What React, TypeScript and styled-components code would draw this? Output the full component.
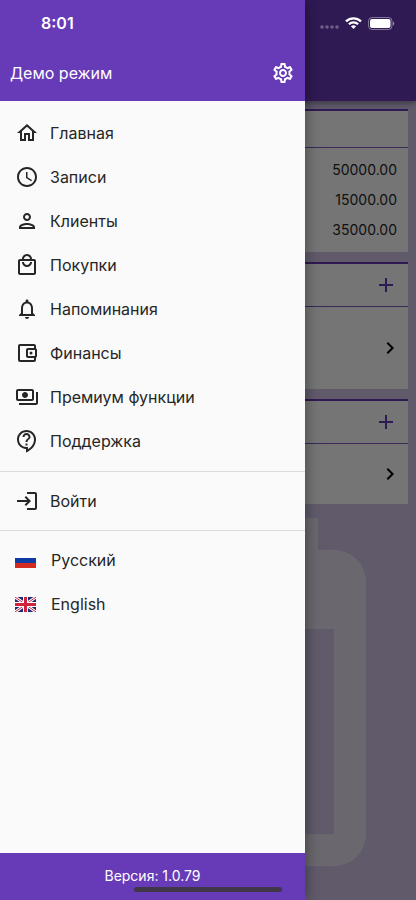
import React from "react";
import styled, { createGlobalStyle } from "styled-components";
import type { IconType } from "react-icons";
import {
  MdAdd,
  MdChevronRight,
  MdLogin,
  MdNotificationsNone,
  MdOutlineAccountBalanceWallet,
  MdOutlineContactSupport,
  MdOutlineHome,
  MdOutlineLocalMall,
  MdOutlinePayments,
  MdOutlinePerson,
  MdOutlineSettings,
  MdSchedule,
} from "react-icons/md";

const color = {
  primary: "#673ab7",
  primaryLight: "#7e57c2",
  page: "#d1c4e9",
  surface: "#fafafa",
  card: "#ffffff",
  text: "#262626",
  divider: "#dcdcdc",
};

const GlobalStyle = createGlobalStyle`
  * { box-sizing: border-box; }
  body { margin: 0; font-family: Inter, "Noto Sans", sans-serif; color: ${color.text}; }
  button { font: inherit; color: inherit; background: none; border: 0; padding: 0; cursor: pointer; }
  svg { display: block; flex-shrink: 0; }
`;

const Screen = styled.div`
  position: relative;
  min-height: 100vh;
  overflow: hidden;
  background: ${color.page};
`;

const AppBar = styled.header`
  position: relative;
  height: 101px;
  background: ${color.primary};
  box-shadow: 0 2px 6px rgba(0, 0, 0, 0.4);
`;

const Watermark = styled.svg`
  position: absolute;
  left: 50%;
  bottom: 34px;
  width: 316px;
  height: 348px;
  margin-left: -158px;
  fill: #e7e2ef;
`;

const Cards = styled.main`
  position: relative;
  display: flex;
  flex-direction: column;
  gap: 10px;
  padding: 8px;
`;

const Card = styled.section`
  background: ${color.card};
  border-top: 2px solid ${color.primary};
`;

const CardHeader = styled.div<{ $height: number }>`
  display: flex;
  align-items: center;
  justify-content: flex-end;
  height: ${(p) => p.$height}px;
  padding-right: 10px;
  border-bottom: 1px solid ${color.primaryLight};
  color: ${color.primary};
`;

const Amounts = styled.div`
  display: flex;
  flex-direction: column;
  padding: 7px 11px;
  font-size: 14px;
  line-height: 30px;
  text-align: right;
`;

const CardLink = styled.button<{ $height: number }>`
  display: flex;
  align-items: center;
  justify-content: flex-end;
  width: 100%;
  height: ${(p) => p.$height}px;
  padding-right: 6px;
  color: #000;
`;

const Scrim = styled.div`
  position: absolute;
  inset: 0;
  background: rgba(0, 0, 0, 0.54);
`;

const Drawer = styled.aside`
  position: absolute;
  inset: 0 auto 0 0;
  display: flex;
  flex-direction: column;
  width: 74%;
  max-width: 305px;
  background: ${color.surface};
  box-shadow: 2px 0 12px rgba(0, 0, 0, 0.35);
`;

const DrawerHeader = styled.div`
  display: flex;
  align-items: center;
  justify-content: space-between;
  height: 101px;
  padding: 45px 10px 0;
  background: ${color.primary};
  color: #fff;
  font-size: 16px;
`;

const Menu = styled.nav`
  flex: 1;
`;

const Group = styled.ul`
  margin: 0;
  padding: 8px 0;
  list-style: none;
  & + & {
    border-top: 1px solid ${color.divider};
    padding: 7px 0;
  }
  &:first-child {
    padding-top: 10px;
  }
`;

const MenuButton = styled.button`
  display: flex;
  align-items: center;
  gap: 11px;
  width: 100%;
  height: 44px;
  padding: 0 15px;
  font-size: 16px;
  text-align: left;
`;

const LanguageButton = styled(MenuButton)`
  gap: 15px;
`;

const DrawerFooter = styled.footer`
  height: 47px;
  background: ${color.primary};
  color: #fff;
  font-size: 14px;
  line-height: 46px;
  text-align: center;
`;

const StatusBar = styled.div`
  position: absolute;
  inset: 0 0 auto 0;
  display: flex;
  align-items: center;
  justify-content: space-between;
  height: 46px;
  padding: 0 21px 0 41px;
  color: #fff;
  font-size: 16px;
  font-weight: 600;
`;

const StatusIcons = styled.div`
  display: flex;
  align-items: center;
  gap: 6px;
`;

const HomeIndicator = styled.div`
  position: absolute;
  left: 50%;
  bottom: 8px;
  width: 148px;
  height: 5px;
  margin-left: -74px;
  border-radius: 3px;
  background: #403748;
`;

const mainItems: { label: string; icon: IconType }[] = [
  { label: "Главная", icon: MdOutlineHome },
  { label: "Записи", icon: MdSchedule },
  { label: "Клиенты", icon: MdOutlinePerson },
  { label: "Покупки", icon: MdOutlineLocalMall },
  { label: "Напоминания", icon: MdNotificationsNone },
  { label: "Финансы", icon: MdOutlineAccountBalanceWallet },
  { label: "Премиум функции", icon: MdOutlinePayments },
  { label: "Поддержка", icon: MdOutlineContactSupport },
];

const RussianFlag = () => (
  <svg width="21" height="15" viewBox="0 0 21 15" aria-hidden="true">
    <path fill="#fff" d="M0 0h21v5H0z" />
    <path fill="#0f3ba5" d="M0 5h21v5H0z" />
    <path fill="#d52b1e" d="M0 10h21v5H0z" />
  </svg>
);

const BritishFlag = () => (
  <svg width="21" height="15" viewBox="0 0 21 15" aria-hidden="true">
    <path fill="#1d2a6d" d="M0 0h21v15H0z" />
    <path stroke="#fff" strokeWidth="3" d="M0 0l21 15M21 0L0 15" />
    <path stroke="#d0233c" strokeWidth="1" d="M0 0l21 15M21 0L0 15" />
    <path stroke="#fff" strokeWidth="5" d="M10.5 0v15M0 7.5h21" />
    <path stroke="#d0233c" strokeWidth="3" d="M10.5 0v15M0 7.5h21" />
  </svg>
);

const Signal = () => (
  <svg width="19" height="12" viewBox="0 0 19 12" fill="#fff" opacity="0.3" aria-hidden="true">
    <circle cx="2" cy="10" r="1.8" />
    <circle cx="7" cy="10" r="1.8" />
    <circle cx="12" cy="10" r="1.8" />
    <circle cx="17" cy="10" r="1.8" />
  </svg>
);

const Wifi = () => (
  <svg width="17" height="12" viewBox="0 0 17 12" fill="none" stroke="#fff" aria-hidden="true">
    <path strokeWidth="2.3" d="M1 4.4C5.2.3 11.8.3 16 4.4" />
    <path strokeWidth="2.2" d="M3.9 7.3c2.6-2.5 6.6-2.5 9.2 0" />
    <path fill="#fff" stroke="none" d="M8.5 12L5.9 9.3c1.5-1.3 3.7-1.3 5.2 0z" />
  </svg>
);

const Battery = () => (
  <svg width="27" height="13" viewBox="0 0 27 13" aria-hidden="true">
    <rect x="0.5" y="0.5" width="23.5" height="12" rx="3.5" fill="none" stroke="#fff" opacity="0.4" />
    <rect x="2" y="2" width="20.5" height="9" rx="2" fill="#fff" />
    <path d="M25 4.5v4c1.7-.6 1.7-3.4 0-4z" fill="#fff" opacity="0.5" />
  </svg>
);

export default function App() {
  return (
    <>
      <GlobalStyle />
      <Screen>
        <Watermark viewBox="0 0 316 348" aria-hidden="true">
          <path
            fillRule="evenodd"
            d="M48 0h32v32h156V0h32v32h16a32 32 0 0 1 32 32v252a32 32 0 0 1-32 32H32a32 32 0 0 1-32-32V64a32 32 0 0 1 32-32h16zM32 111v205h252V111z"
          />
        </Watermark>
        <AppBar />
        <Cards>
          <Card>
            <CardHeader $height={37} />
            <Amounts>
              <span>50000.00</span>
              <span>15000.00</span>
              <span>35000.00</span>
            </Amounts>
          </Card>
          <Card>
            <CardHeader $height={43}>
              <button aria-label="Добавить запись">
                <MdAdd size={24} />
              </button>
            </CardHeader>
            <CardLink $height={82} aria-label="Открыть записи">
              <MdChevronRight size={24} />
            </CardLink>
          </Card>
          <Card>
            <CardHeader $height={43}>
              <button aria-label="Добавить напоминание">
                <MdAdd size={24} />
              </button>
            </CardHeader>
            <CardLink $height={60} aria-label="Открыть напоминания">
              <MdChevronRight size={24} />
            </CardLink>
          </Card>
        </Cards>
        <Scrim />
        <Drawer>
          <DrawerHeader>
            <span>Демо режим</span>
            <button aria-label="Настройки">
              <MdOutlineSettings size={24} />
            </button>
          </DrawerHeader>
          <Menu>
            <Group>
              {mainItems.map(({ label, icon: Icon }) => (
                <li key={label}>
                  <MenuButton>
                    <Icon size={24} />
                    {label}
                  </MenuButton>
                </li>
              ))}
            </Group>
            <Group>
              <li>
                <MenuButton>
                  <MdLogin size={24} />
                  Войти
                </MenuButton>
              </li>
            </Group>
            <Group>
              <li>
                <LanguageButton>
                  <RussianFlag />
                  Русский
                </LanguageButton>
              </li>
              <li>
                <LanguageButton>
                  <BritishFlag />
                  English
                </LanguageButton>
              </li>
            </Group>
          </Menu>
          <DrawerFooter>Версия: 1.0.79</DrawerFooter>
        </Drawer>
        <StatusBar>
          <span>8:01</span>
          <StatusIcons>
            <Signal />
            <Wifi />
            <Battery />
          </StatusIcons>
        </StatusBar>
        <HomeIndicator />
      </Screen>
    </>
  );
}
